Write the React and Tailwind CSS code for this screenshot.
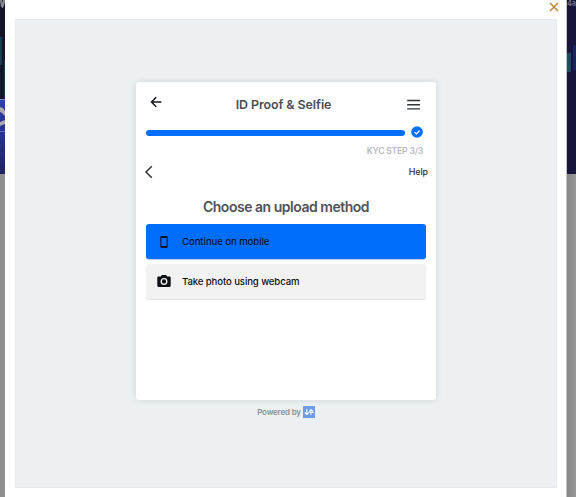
import React from "react";

function LeftBackdrop() {
  return (
    <div className="w-[5px] shrink-0 flex flex-col overflow-hidden bg-[#8f8f8f]">
      <svg width="5" height="174" viewBox="0 0 5 174" className="block shrink-0">
        <defs>
          <linearGradient id="lb" x1="0" y1="0" x2="0" y2="1">
            <stop offset="0" stopColor="#2b3fae" />
            <stop offset="1" stopColor="#20245c" />
          </linearGradient>
        </defs>
        <rect width="5" height="99" fill="#15142a" />
        <path d="M0 0h2l1 7H1zM3 0h2v2L3 8H2z" fill="#8b8b95" />
        <rect y="37" width="2" height="28" fill="#163c50" />
        <rect x="4" y="60" width="1" height="38" fill="#1d3a4c" />
        <rect y="99" width="5" height="75" fill="url(#lb)" />
        <rect y="99" width="5" height="1" fill="#7f8ccf" />
        <path d="M0 107l3 1 2 3v5l-3-3-2-1zM0 122l5-2v4l-5 2z" fill="#a9a9ae" />
        <rect y="131" width="5" height="1" fill="#6674b8" />
      </svg>
    </div>
  );
}

function RightBackdrop() {
  return (
    <div className="w-[9px] shrink-0 overflow-hidden bg-linear-to-r from-[#858585] to-[#999999]">
      <svg width="9" height="174" viewBox="0 0 9 174" className="block">
        <rect width="9" height="174" fill="#17163a" />
        <rect y="53" width="4" height="19" fill="#1c4a5e" />
        <rect x="6" y="45" width="3" height="25" fill="#1d2260" />
        <text x="0" y="6" fontSize="7.5" fill="#8b8b95" fontFamily="Inter, sans-serif">4a</text>
      </svg>
    </div>
  );
}

function VerificationCard() {
  return (
    <section className="w-[300px] h-[318px] rounded-[3px] bg-white px-[10px] shadow-[0_0_6px_rgba(80,90,100,0.18)]">
      <header className="flex h-[46px] items-center justify-between pl-[4px] pr-[13px]">
        <svg width="12" height="12" viewBox="0 0 12 12" fill="none" stroke="#16181b" strokeWidth="1.5" className="-mt-[7px]">
          <path d="M11.4 6H1.6M6.2 1.3L1.5 6l4.7 4.7" />
        </svg>
        <h1 className="-ml-[2px] text-[12.4px] leading-4 font-semibold text-[#484e55] whitespace-nowrap tracking-[-0.05px]">ID Proof &amp; Selfie</h1>
        <svg width="14" height="12" viewBox="0 0 14 12" fill="none" stroke="#303235" strokeWidth="1.4" className="-mr-[8px]">
          <path d="M.2 1.5h12.8M.2 5.7h12.8M.2 9.9h12.8" />
        </svg>
      </header>
      <div className="flex h-[10px] items-center">
        <div className="h-[6px] w-[259px] rounded-full bg-[#0070fa]" />
        <svg width="12" height="12" viewBox="0 0 12 12" className="ml-[6px] -mt-[2px]">
          <circle cx="6" cy="6" r="5.8" fill="#0070fa" />
          <path d="M3.6 6.1l1.8 1.8L8.6 4.5" fill="none" stroke="#fff" strokeWidth="1.3" />
        </svg>
      </div>
      <p className="mt-[7px] h-3 pr-[3px] text-right text-[8.6px] leading-3 font-semibold tracking-[-0.2px] text-[#b9b9bc]">KYC STEP 3/3</p>
      <div className="-mr-[2px] -ml-[2px] mt-[7px] flex h-4 items-center justify-between">
        <svg width="9" height="14" viewBox="0 0 9 14" fill="none" stroke="#303236" strokeWidth="1.5">
          <path d="M7.8 1.2L2 7l5.8 5.8" />
        </svg>
        <span className="text-[8.9px] leading-4 font-medium tracking-[-0.1px] text-[#2b2d30]">Help</span>
      </div>
      <h2 className="mt-[17px] text-center text-[14px] leading-5 font-semibold tracking-[-0.48px] text-[#505357]">Choose an upload method</h2>
      <button className="mt-[7px] flex h-[35px] w-[280px] items-center rounded-[3px] bg-[#006dfb] pl-[11px] text-[#08162b] shadow-[0_1px_1px_rgba(0,80,200,0.3)]">
        <svg width="14" height="14" viewBox="0 0 14 14" className="shrink-0">
          <path fillRule="evenodd" d="M4.3 1h5.4a1 1 0 011 1v10a1 1 0 01-1 1H4.3a1 1 0 01-1-1V2a1 1 0 011-1zm.1 1.9v8.2h5.2V2.9z" fill="currentColor" />
        </svg>
        <span className="ml-[11px] text-[9.6px] leading-4 font-medium tracking-[-0.08px]">Continue on mobile</span>
      </button>
      <button className="mt-[5px] flex h-[35px] w-[280px] items-center rounded-[3px] bg-[#f2f2f2] pl-[11px] text-[#101114] shadow-[0_1px_1px_rgba(0,0,0,0.12)]">
        <svg width="14" height="14" viewBox="0 0 14 14" className="-mt-px shrink-0">
          <path d="M1.4 2.5h2.3L4.9 1h4.2l1.2 1.5h2.3A1.1 1.1 0 0113.7 3.6v8.2a1.1 1.1 0 01-1.1 1.1H1.4A1.1 1.1 0 01.3 11.8V3.6a1.1 1.1 0 011.1-1.1z" fill="currentColor" />
          <circle cx="7" cy="7.5" r="2.8" fill="none" stroke="#f2f2f2" strokeWidth="1.3" />
        </svg>
        <span className="ml-[11px] text-[9.6px] leading-4 font-medium tracking-[-0.11px]">Take photo using webcam</span>
      </button>
    </section>
  );
}

export default function App() {
  return (
    <div className="flex h-[497px] w-[576px] overflow-hidden font-['Inter','Liberation_Sans',sans-serif]">
      <LeftBackdrop />
      <div className="flex w-[562px] shrink-0 flex-col border-r border-[#c4c4c6] bg-white pl-[10px]">
        <div className="flex h-[19px] justify-end pr-[7px]">
          <svg width="10" height="10" viewBox="0 0 10 10" fill="none" stroke="#bd8437" strokeWidth="1.5" className="mt-[2px]">
            <path d="M1 1l8 8M9 1L1 9" />
          </svg>
        </div>
        <main className="flex h-[469px] w-[542px] flex-col border border-[#e7ebed] bg-[#ecf0f3] pl-[120px] pt-[62px]">
          <VerificationCard />
          <footer className="mt-[6px] flex h-[12px] w-[300px] items-center justify-center gap-[2px]">
            <span className="text-[8px] leading-3 font-semibold tracking-[-0.18px] text-[#8b8f93]">Powered by</span>
            <svg width="12" height="12" viewBox="0 0 12 12">
              <rect width="12" height="12" rx=".5" fill="#6b9de9" />
              <path d="M3.8 3.3v5M1.9 6.5l1.9 2 1.9-2M8 8.7v-5M6.1 5.6L8 3.5l2.2 2.2M6.5 6.5h4" fill="none" stroke="#fff" strokeWidth="1.1" />
            </svg>
          </footer>
        </main>
      </div>
      <RightBackdrop />
    </div>
  );
}
